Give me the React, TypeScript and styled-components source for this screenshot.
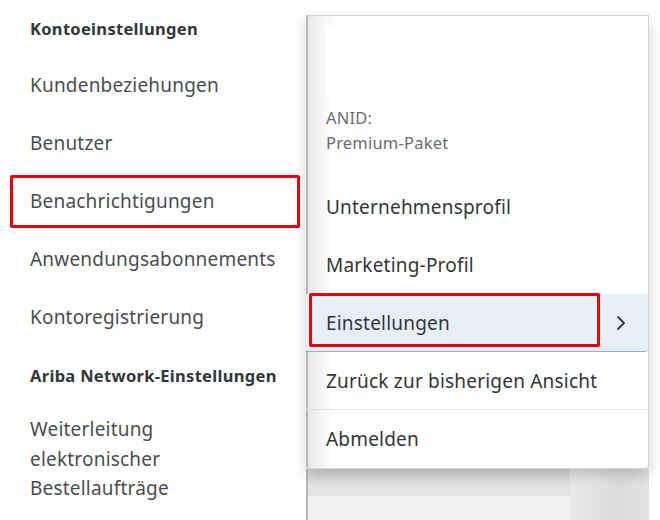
import React from 'react';
import styled, { createGlobalStyle } from 'styled-components';

const GlobalStyle = createGlobalStyle`
    html, body {
        margin: 0;
        padding: 0;
        background: #fff;
    }
    body {
        width: 660px;
        height: 520px;
        overflow: hidden;
        font-family: "Noto Sans", "Open Sans", Arial, sans-serif;
        color: #32363a;
    }
`;

const Page = styled.div`
    display: flex;
    width: 660px;
    height: 520px;
`;

const SideNav = styled.nav`
    width: 306px;
    flex-shrink: 0;
    display: flex;
    flex-direction: column;
`;

const NavHeading = styled.div<{ $height: number }>`
    height: ${(p) => p.$height}px;
    display: flex;
    align-items: center;
    padding-left: 30px;
    font-size: 16.5px;
    letter-spacing: 0.3px;
    font-weight: 700;
    color: #32363a;
`;

const NavItem = styled.div`
    height: 58px;
    display: flex;
    align-items: center;
`;

const NavLabel = styled.div<{ $marked?: boolean }>`
    box-sizing: border-box;
    width: 290px;
    height: 53px;
    margin-left: 10px;
    padding-left: 17px;
    display: flex;
    align-items: center;
    font-size: 19px;
    letter-spacing: 0.2px;
    color: #4a4d50;
    white-space: nowrap;
    border: 3px solid ${(p) => (p.$marked ? '#e8000b' : 'transparent')};
    border-radius: 2px;
`;

const NavMultiLine = styled.div`
    padding: 11px 0 0 30px;
    font-size: 19px;
    letter-spacing: 0.2px;
    line-height: 29.5px;
    color: #4a4d50;
`;

const RightArea = styled.div`
    width: 343px;
    display: flex;
    flex-direction: column;
    padding-top: 15px;
`;

const MenuPanel = styled.div`
    box-sizing: border-box;
    height: 455px;
    background: #fff;
    border: 1px solid #d4d4d4;
    border-left: 2px solid #b8b8b8;
    border-radius: 0 0 4px 4px;
    box-shadow: inset 30px 0 25px -22px rgba(0, 0, 0, 0.12), 0 6px 14px rgba(0, 0, 0, 0.18);
    display: flex;
    flex-direction: column;
    position: relative;
    z-index: 1;
`;

const AccountHeader = styled.div`
    height: 162px;
    padding: 13px 0 0 18px;
    box-sizing: border-box;
`;

const LogoSlot = styled.div`
    width: 220px;
    height: 67px;
    background: #fff;
`;

const AccountInfo = styled.div`
    margin-top: 9px;
    font-size: 16.5px;
    letter-spacing: 0.2px;
    line-height: 25px;
    color: #6a6d70;
`;

const MenuItem = styled.div<{ $active?: boolean; $divider?: boolean }>`
    box-sizing: border-box;
    height: 58px;
    margin-left: -2px;
    padding-left: 20px;
    padding-right: 22px;
    display: flex;
    align-items: center;
    justify-content: space-between;
    font-size: 19px;
    letter-spacing: 0.2px;
    color: #32363a;
    white-space: nowrap;
    background: ${(p) => (p.$active ? '#e6eff8' : 'transparent')};
    border-bottom: 1px solid ${(p) => (p.$active ? '#8fb0d0' : p.$divider ? '#e2e2e2' : 'transparent')};
    border-radius: ${(p) => (p.$active ? '0 0 3px 3px' : '0')};
    position: relative;
`;

const Marker = styled.div`
    position: absolute;
    left: 3px;
    top: -1px;
    width: 291px;
    height: 54px;
    box-sizing: border-box;
    border: 3px solid #e8000b;
    border-radius: 2px;
`;

const Backdrop = styled.div`
    flex: 1;
    display: flex;
    border-left: 2px solid #b8b8b8;
`;

const BackdropMain = styled.div`
    width: 262px;
    display: flex;
    flex-direction: column;
`;

const BackdropRow = styled.div<{ $tone: string }>`
    height: 25px;
    background: ${(p) => p.$tone};
    border-bottom: 2px solid #e4e4e4;
`;

const BackdropSide = styled.div`
    flex: 1;
    background: linear-gradient(90deg, #e9e9e9, #dcdcdc 60%, #e2e2e2);
`;

const Chevron = () => (
    <svg width="10" height="16" viewBox="0 0 10 16">
        <polyline points="2,2 8,8 2,14" fill="none" stroke="#32363a" strokeWidth="1.8" strokeLinecap="round" strokeLinejoin="round" />
    </svg>
);

const App: React.FC = () => {
    return (
        <>
            <GlobalStyle />
            <Page>
                <SideNav>
                    <NavHeading $height={56}>Kontoeinstellungen</NavHeading>
                    <NavItem><NavLabel>Kundenbeziehungen</NavLabel></NavItem>
                    <NavItem><NavLabel>Benutzer</NavLabel></NavItem>
                    <NavItem><NavLabel $marked>Benachrichtigungen</NavLabel></NavItem>
                    <NavItem><NavLabel>Anwendungsabonnements</NavLabel></NavItem>
                    <NavItem><NavLabel>Kontoregistrierung</NavLabel></NavItem>
                    <NavHeading $height={58}>Ariba Network-Einstellungen</NavHeading>
                    <NavMultiLine>
                        Weiterleitung<br />
                        elektronischer<br />
                        Bestellaufträge
                    </NavMultiLine>
                </SideNav>
                <RightArea>
                    <MenuPanel>
                        <AccountHeader>
                            <LogoSlot />
                            <AccountInfo>
                                ANID:<br />
                                Premium-Paket
                            </AccountInfo>
                        </AccountHeader>
                        <MenuItem>Unternehmensprofil</MenuItem>
                        <MenuItem>Marketing-Profil</MenuItem>
                        <MenuItem $active>
                            Einstellungen
                            <Chevron />
                            <Marker />
                        </MenuItem>
                        <MenuItem $divider>Zurück zur bisherigen Ansicht</MenuItem>
                        <MenuItem>Abmelden</MenuItem>
                    </MenuPanel>
                    <Backdrop>
                        <BackdropMain>
                            <BackdropRow $tone="linear-gradient(180deg, #d6d6d6, #e6e6e6)" />
                            <BackdropRow $tone="#f1f1f1" />
                        </BackdropMain>
                        <BackdropSide />
                    </Backdrop>
                </RightArea>
            </Page>
        </>
    );
};

export default App;
